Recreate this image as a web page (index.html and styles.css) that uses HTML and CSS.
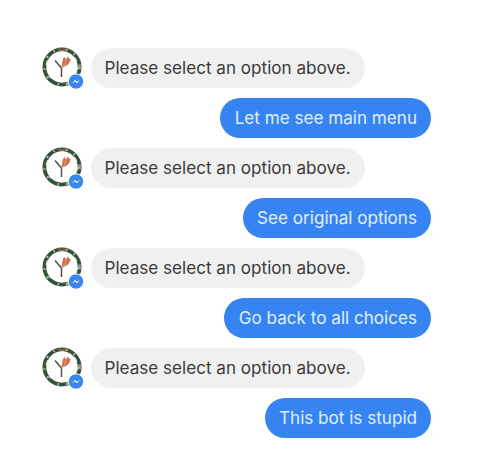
FILE: index.html
```html
<!DOCTYPE html>
<html lang="en">
<head>
	<meta charset="UTF-8">
	<title>Messenger bot chat</title>
	<link rel="stylesheet" href="styles.css">
</head>
<body>
	<svg width="0" height="0" class="defs">
		<defs>
			<g id="ring">
				<circle cx="20" cy="20" r="17.6" fill="#fff" stroke="#34513a" stroke-width="3.8"/>
				<circle cx="20" cy="20" r="17.6" fill="none" stroke="#a9b89e" stroke-width="2.4" stroke-dasharray="2 7 1.5 11"/>
				<circle cx="20" cy="20" r="16" fill="none" stroke="#eef0ea" stroke-width="1" stroke-dasharray="3 12 5 17"/>
				<path d="M16 2.8 A17.6 17.6 0 0 1 25 3.2" fill="none" stroke="#8d5f4c" stroke-width="2.6" stroke-dasharray="3 2"/>
			</g>
			<g id="plant">
				<path d="M19.5 30 L19.5 21 L13 13.5" fill="none" stroke="#5b4b3e" stroke-width="1.5"/>
				<path d="M19.5 22 C20 19 21 17 22 16" fill="none" stroke="#94835f" stroke-width="1.3"/>
				<path d="M21 20 C19.5 16 20.5 12 22.5 10 L24 12.5 L26 9 L27 12 L28.5 11.5 C28.5 15.5 25.5 19 21 20 Z" fill="#d0714f"/>
				<path d="M24 12.5 C23.5 15 23 17 21.8 19" fill="none" stroke="#e8a888" stroke-width="0.8"/>
			</g>
			<g id="badge">
				<circle cx="34" cy="34.5" r="7.7" fill="#3a86f2" stroke="#fff" stroke-width="1"/>
				<path d="M30 36.5 L33 33 L35 34.8 L38 32.5 L35 36.2 L33 34.5 Z" fill="#fff"/>
			</g>
		</defs>
	</svg>

	<div class="chat">
		<div class="row">
			<svg class="avatar" width="42" height="42" viewBox="0 0 42 42"><use href="#ring"/><use href="#plant"/><use href="#badge"/></svg>
			<div class="bubble bot">Please select an option above.</div>
		</div>
		<div class="bubble me">Let me see main menu</div>

		<div class="row">
			<svg class="avatar" width="42" height="42" viewBox="0 0 42 42"><use href="#ring"/><use href="#plant"/><use href="#badge"/></svg>
			<div class="bubble bot">Please select an option above.</div>
		</div>
		<div class="bubble me">See original options</div>

		<div class="row">
			<svg class="avatar" width="42" height="42" viewBox="0 0 42 42"><use href="#ring"/><use href="#plant"/><use href="#badge"/></svg>
			<div class="bubble bot">Please select an option above.</div>
		</div>
		<div class="bubble me">Go back to all choices</div>

		<div class="row">
			<svg class="avatar" width="42" height="42" viewBox="0 0 42 42"><use href="#ring"/><use href="#plant"/><use href="#badge"/></svg>
			<div class="bubble bot">Please select an option above.</div>
		</div>
		<div class="bubble me">This bot is stupid</div>
	</div>
</body>
</html>
```

FILE: styles.css
```css
* {
	box-sizing: border-box;
	margin: 0;
	padding: 0;
}

body {
	background: #fff;
	font-family: Inter, "Liberation Sans", sans-serif;
}

.defs {
	display: block;
	height: 0;
}

.chat {
	display: flex;
	flex-direction: column;
	gap: 10.5px;
	width: 431px;
	padding: 48px 0 0 42px;
}

.row {
	display: flex;
	align-items: center;
	gap: 7px;
	height: 39.5px;
}

/* the source picture is a soft upscale */
.avatar {
	flex: none;
	filter: blur(0.4px);
}

.bubble {
	height: 39.5px;
	line-height: 39px;
	padding: 0 14px 0 13.5px;
	border-radius: 20px;
	font-size: 17.1px;
	white-space: nowrap;
}

.bot {
	background: #f0f0f0;
	color: #3a3a3c;
}

.me {
	align-self: flex-end;
	padding-left: 14.5px;
	background: #3584f2;
	color: #e4eefc;
}
```
